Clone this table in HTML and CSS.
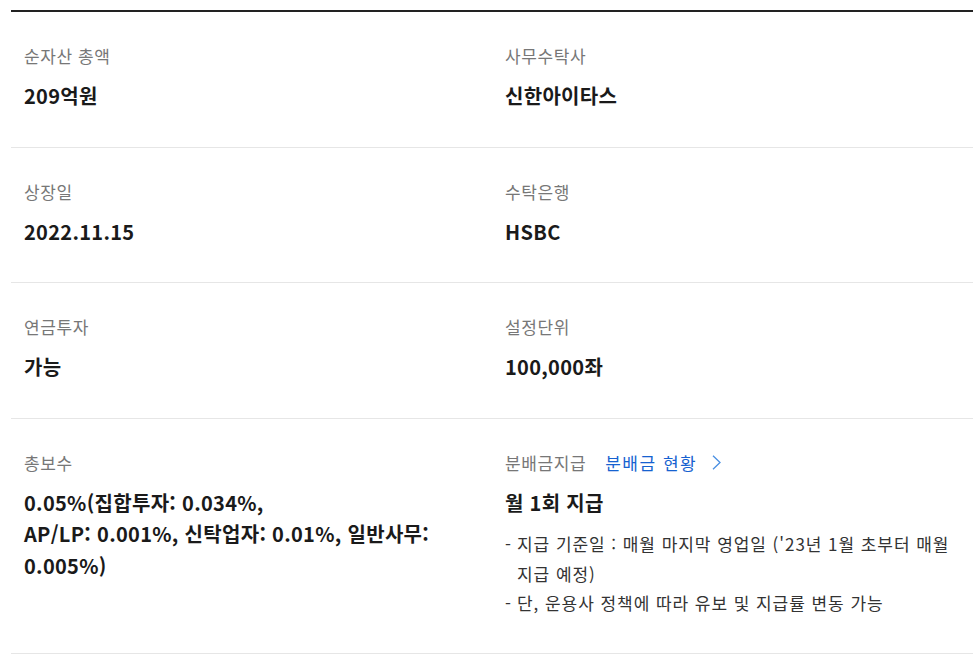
FILE: index.html
```html
<!DOCTYPE html>
<html lang="ko">
<head>
<meta charset="utf-8">
<title>ETF 정보</title>
<link rel="stylesheet" href="styles.css">
</head>
<body>
<div class="info">
  <div class="row">
    <div class="cell">
      <div class="label">순자산 총액</div>
      <div class="value">209억원</div>
    </div>
    <div class="cell">
      <div class="label">사무수탁사</div>
      <div class="value">신한아이타스</div>
    </div>
  </div>
  <div class="row">
    <div class="cell">
      <div class="label">상장일</div>
      <div class="value">2022.11.15</div>
    </div>
    <div class="cell">
      <div class="label">수탁은행</div>
      <div class="value">HSBC</div>
    </div>
  </div>
  <div class="row">
    <div class="cell">
      <div class="label">연금투자</div>
      <div class="value">가능</div>
    </div>
    <div class="cell">
      <div class="label">설정단위</div>
      <div class="value">100,000좌</div>
    </div>
  </div>
  <div class="row">
    <div class="cell">
      <div class="label">총보수</div>
      <div class="value">0.05%(집합투자: 0.034%,<br>AP/LP: 0.001%, 신탁업자: 0.01%, 일반사무:<br>0.005%)</div>
    </div>
    <div class="cell">
      <div class="label label-row">분배금지급<a class="link" href="#">분배금 현황<svg class="chev" width="9" height="15" viewBox="0 0 9 15"><polyline points="1,0.8 8,7.5 1,14.2" fill="none" stroke="#4a8fe2" stroke-width="1.3"/></svg></a></div>
      <div class="value">월 1회 지급</div>
      <ul class="notes">
        <li>지급 기준일 : 매월 마지막 영업일 ('23년 1월 초부터 매월<br>지급 예정)</li>
        <li>단, 운용사 정책에 따라 유보 및 지급률 변동 가능</li>
      </ul>
    </div>
  </div>
</div>
</body>
</html>
```

FILE: styles.css
```css
html, body {
  margin: 0;
  padding: 0;
  background: #ffffff;
}

body {
  font-family: "Noto Sans CJK KR", "Noto Sans", sans-serif;
  color: #1a1a1a;
}

.info {
  margin: 10px 0 0 11px;
  width: 962px;
  border-top: 2px solid #222222;
}

.row {
  display: grid;
  grid-template-columns: 1fr 1fr;
  border-bottom: 1px solid #e6e6e6;
}

.cell {
  padding: 32px 13px 35px 13px;
}

.label {
  font-size: 17px;
  line-height: 24px;
  letter-spacing: 0.6px;
  color: #777777;
}

.label-row {
  display: flex;
  align-items: center;
}

.link {
  display: inline-flex;
  align-items: center;
  margin-left: 19px;
  letter-spacing: 1.5px;
  color: #1662d0;
  text-decoration: none;
}

.chev {
  margin-left: 15px;
}

.value {
  margin-top: 12px;
  font-size: 20px;
  line-height: 31.5px;
  letter-spacing: 0.3px;
  font-weight: 700;
  color: #1a1a1a;
}

.notes {
  list-style: none;
  margin: 11px 0 0 0;
  padding: 0;
  font-size: 17px;
  line-height: 29.5px;
  letter-spacing: 0.95px;
  color: #333333;
}

.notes li {
  padding-left: 12px;
  position: relative;
}

.notes li::before {
  content: "-";
  position: absolute;
  left: 0;
  top: 0;
}
```
